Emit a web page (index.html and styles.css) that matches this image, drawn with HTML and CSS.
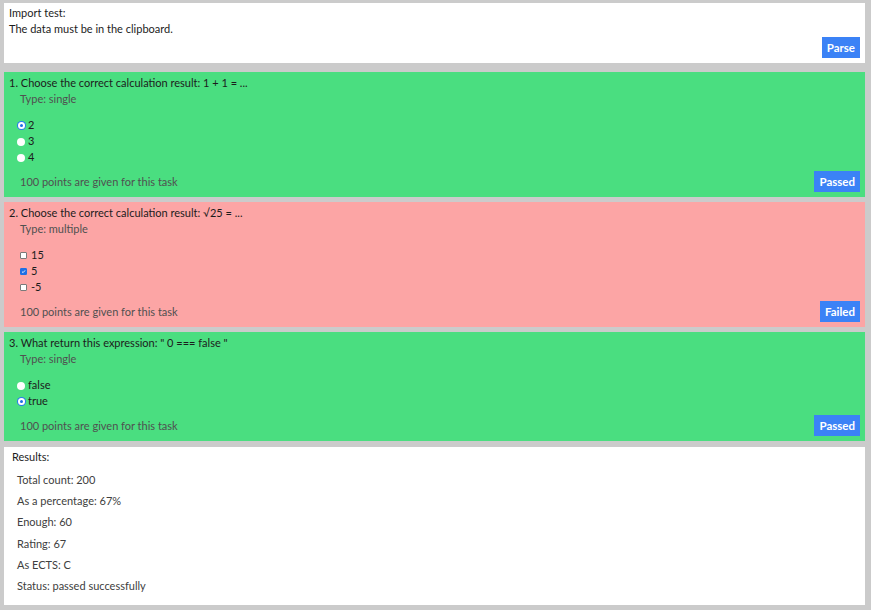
FILE: index.html
```html
<!DOCTYPE html>
<html lang="en">
<head>
<meta charset="utf-8">
<title>Import test</title>
<link rel="stylesheet" href="styles.css">
</head>
<body>
<div class="page">
  <section class="panel panel-import">
    <div class="line">Import test:</div>
    <div class="line">The data must be in the clipboard.</div>
    <div class="actions"><button class="btn">Parse</button></div>
  </section>

  <section class="panel task passed">
    <div class="line">1. Choose the correct calculation result: 1 + 1 = ...</div>
    <div class="line muted indent">Type: single</div>
    <ul class="options">
      <li class="opt"><span class="radio checked"></span>2</li>
      <li class="opt"><span class="radio"></span>3</li>
      <li class="opt"><span class="radio"></span>4</li>
    </ul>
    <div class="footer">
      <span class="muted indent">100 points are given for this task</span>
      <button class="btn">Passed</button>
    </div>
  </section>

  <section class="panel task failed">
    <div class="line">2. Choose the correct calculation result: √25 = ...</div>
    <div class="line muted indent">Type: multiple</div>
    <ul class="options">
      <li class="opt"><span class="check"></span>15</li>
      <li class="opt"><span class="check checked"><svg viewBox="0 0 8 8" width="8" height="8"><path d="M1.6 4.2 L3.3 5.8 L6.5 2.2" fill="none" stroke="#fff" stroke-width="1.4"/></svg></span>5</li>
      <li class="opt"><span class="check"></span>-5</li>
    </ul>
    <div class="footer">
      <span class="muted indent">100 points are given for this task</span>
      <button class="btn">Failed</button>
    </div>
  </section>

  <section class="panel task passed">
    <div class="line">3. What return this expression: " 0 === false "</div>
    <div class="line muted indent">Type: single</div>
    <ul class="options">
      <li class="opt"><span class="radio"></span>false</li>
      <li class="opt"><span class="radio checked"></span>true</li>
    </ul>
    <div class="footer">
      <span class="muted indent">100 points are given for this task</span>
      <button class="btn">Passed</button>
    </div>
  </section>

  <section class="panel results">
    <div class="line results-title">Results:</div>
    <ul class="results-list">
      <li>Total count: 200</li>
      <li>As a percentage: 67%</li>
      <li>Enough: 60</li>
      <li>Rating: 67</li>
      <li>As ECTS: C</li>
      <li>Status: passed successfully</li>
    </ul>
  </section>
</div>
</body>
</html>
```

FILE: styles.css
```css
* { box-sizing: border-box; }

html, body {
  margin: 0;
  padding: 0;
  background: #cbcbcb;
}

body {
  font-family: Lato, "Noto Sans", sans-serif;
  font-size: 11px;
  color: #1c1c1c;
}

.page {
  display: flex;
  flex-direction: column;
  gap: 5px;
  padding: 3px 6px 5px 4px;
  height: 610px;
}

.panel {
  background: #fff;
  padding: 3px 5px 5px 5px;
}

.panel-import {
  padding-top: 2px;
  margin-bottom: 4px;
}

.line {
  line-height: 16px;
  white-space: nowrap;
}

.actions {
  display: flex;
  justify-content: flex-end;
}

.btn {
  height: 21px;
  padding: 0 5px;
  border: 0;
  background: #3b82f6;
  color: #fff;
  font-family: Lato, "Noto Sans", sans-serif;
  font-weight: 700;
  font-size: 11.5px;
  line-height: 21px;
}

.task.passed { background: #4ade80; }
.task.failed { background: #fca5a5; }

.muted { color: #505050; }
.indent { padding-left: 11px; }

.options {
  list-style: none;
  margin: 10px 0 0 0;
  padding: 0;
}

.opt {
  display: flex;
  align-items: center;
  height: 16px;
  line-height: 16px;
}

.radio {
  width: 8px;
  height: 8px;
  border-radius: 50%;
  background: #fff;
  margin: 1px 3px 0 8px;
  flex: none;
}

.radio.checked {
  background: #1f6fe5;
  border: 2px solid #fff;
  box-shadow: 0 0 0 1px #2a7af0;
  width: 7px;
  height: 7px;
  margin-left: 8.5px;
  margin-right: 3.5px;
}

.check {
  width: 7px;
  height: 7px;
  background: #fff;
  border: 1px solid #7a7a7a;
  border-radius: 1px;
  margin: 1px 4px 0 11px;
  flex: none;
  display: flex;
  align-items: center;
  justify-content: center;
}

.check.checked {
  background: #1f6fe5;
  border-color: #1f6fe5;
}

.check svg { display: block; width: 7px; height: 7px; }

.footer {
  display: flex;
  justify-content: space-between;
  align-items: center;
  margin-top: 6px;
}

.results {
  flex: 1;
  margin-top: 1px;
  padding: 2px 8px 8px 8px;
}

.results-list {
  list-style: none;
  margin: 4px 0 0 0;
  padding: 0 0 0 5px;
  color: #404040;
}

.results-list li {
  line-height: 21.2px;
}
```
